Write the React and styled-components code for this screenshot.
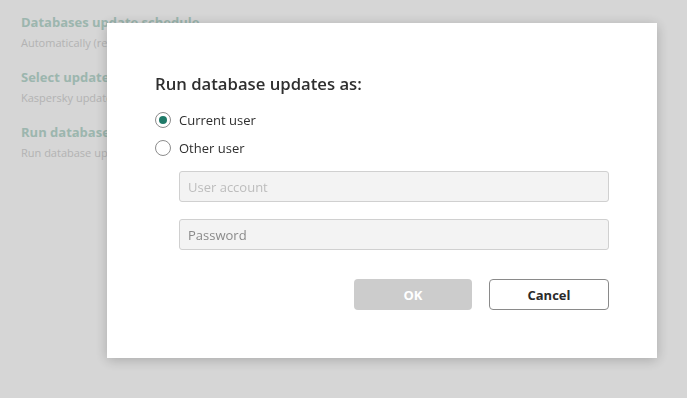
import styled, { createGlobalStyle } from "styled-components";

const Global = createGlobalStyle`
  html, body {
    margin: 0;
    padding: 0;
    background: #ffffff;
  }
  body {
    font-family: "Segoe UI", "Open Sans", "Noto Sans", sans-serif;
  }
`;

const settings = [
  { title: "Databases update schedule", text: "Automatically (recommended)" },
  { title: "Select update source", text: "Kaspersky update servers" },
  { title: "Run database updates as", text: "Run database updates as current user" },
];

export default function App() {
  return (
    <>
      <Global />
      <Page>
        {settings.map((s) => (
          <Section key={s.title}>
            <SectionTitle>{s.title}</SectionTitle>
            <SectionText>{s.text}</SectionText>
          </Section>
        ))}
      </Page>
      <Overlay>
        <Dialog>
          <Title>Run database updates as:</Title>
          <Options>
            <Option>
              <Radio $checked />
              <OptionLabel>Current user</OptionLabel>
            </Option>
            <Option>
              <Radio />
              <OptionLabel>Other user</OptionLabel>
            </Option>
          </Options>
          <Fields>
            <Field placeholder="User account" disabled />
            <Field placeholder="Password" $dark disabled />
          </Fields>
          <Buttons>
            <OkButton>OK</OkButton>
            <CancelButton>Cancel</CancelButton>
          </Buttons>
        </Dialog>
      </Overlay>
    </>
  );
}

const Page = styled.div`
  width: 687px;
  height: 398px;
  padding: 13px 21px 0;
  box-sizing: border-box;
  display: flex;
  flex-direction: column;
  gap: 17px;
  overflow: hidden;
`;

const Section = styled.div`
  display: flex;
  flex-direction: column;
  gap: 4px;
`;

const SectionTitle = styled.div`
  font-size: 13px;
  font-weight: 700;
  color: #bad9d0;
  line-height: 18px;
  white-space: nowrap;
`;

const SectionText = styled.div`
  font-size: 11px;
  color: #d6d6d6;
  line-height: 16px;
  white-space: nowrap;
`;

const Overlay = styled.div`
  position: fixed;
  inset: 0;
  background: rgba(0, 0, 0, 0.16);
  display: flex;
  align-items: flex-start;
  padding: 23px 30px 0 107px;
  box-sizing: border-box;
`;

const Dialog = styled.div`
  width: 550px;
  height: 335px;
  background: #ffffff;
  box-sizing: border-box;
  padding: 49px 48px 0 48px;
  box-shadow: 0 2px 12px rgba(0, 0, 0, 0.22);
  display: flex;
  flex-direction: column;
`;

const Title = styled.div`
  font-size: 16.7px;
  font-weight: 600;
  color: #2f2f2f;
  line-height: 24px;
`;

const Options = styled.div`
  display: flex;
  flex-direction: column;
  gap: 10px;
  margin-top: 15px;
`;

const Option = styled.div`
  display: flex;
  align-items: center;
  gap: 8px;
  height: 18px;
`;

const Radio = styled.span`
  width: 16px;
  height: 16px;
  border-radius: 50%;
  border: 1px solid #8c8c8c;
  box-sizing: border-box;
  display: flex;
  align-items: center;
  justify-content: center;

  &::after {
    content: "";
    width: 8px;
    height: 8px;
    border-radius: 50%;
    background: ${(p) => (p.$checked ? "#1f7a68" : "transparent")};
  }
`;

const OptionLabel = styled.span`
  font-size: 13px;
  color: #2f2f2f;
`;

const Fields = styled.div`
  display: flex;
  flex-direction: column;
  gap: 17px;
  margin: 14px 0 0 24px;
`;

const Field = styled.input`
  width: 430px;
  height: 31px;
  box-sizing: border-box;
  border: 1px solid #d0d0d0;
  border-radius: 3px;
  background: #f3f3f3;
  padding: 0 8px;
  font-family: inherit;
  font-size: 13px;

  &::placeholder {
    color: ${(p) => (p.$dark ? "#8a8a8a" : "#bdbdbd")};
  }
`;

const Buttons = styled.div`
  display: flex;
  justify-content: flex-end;
  gap: 17px;
  margin-top: 29px;
`;

const BaseButton = styled.button`
  height: 31px;
  border-radius: 4px;
  font-family: inherit;
  font-size: 13px;
  font-weight: 700;
  box-sizing: border-box;
`;

const OkButton = styled(BaseButton)`
  width: 118px;
  background: #cccccc;
  border: none;
  color: #ffffff;
`;

const CancelButton = styled(BaseButton)`
  width: 120px;
  background: #ffffff;
  border: 1px solid #8a8a8a;
  color: #2a2a2a;
`;
